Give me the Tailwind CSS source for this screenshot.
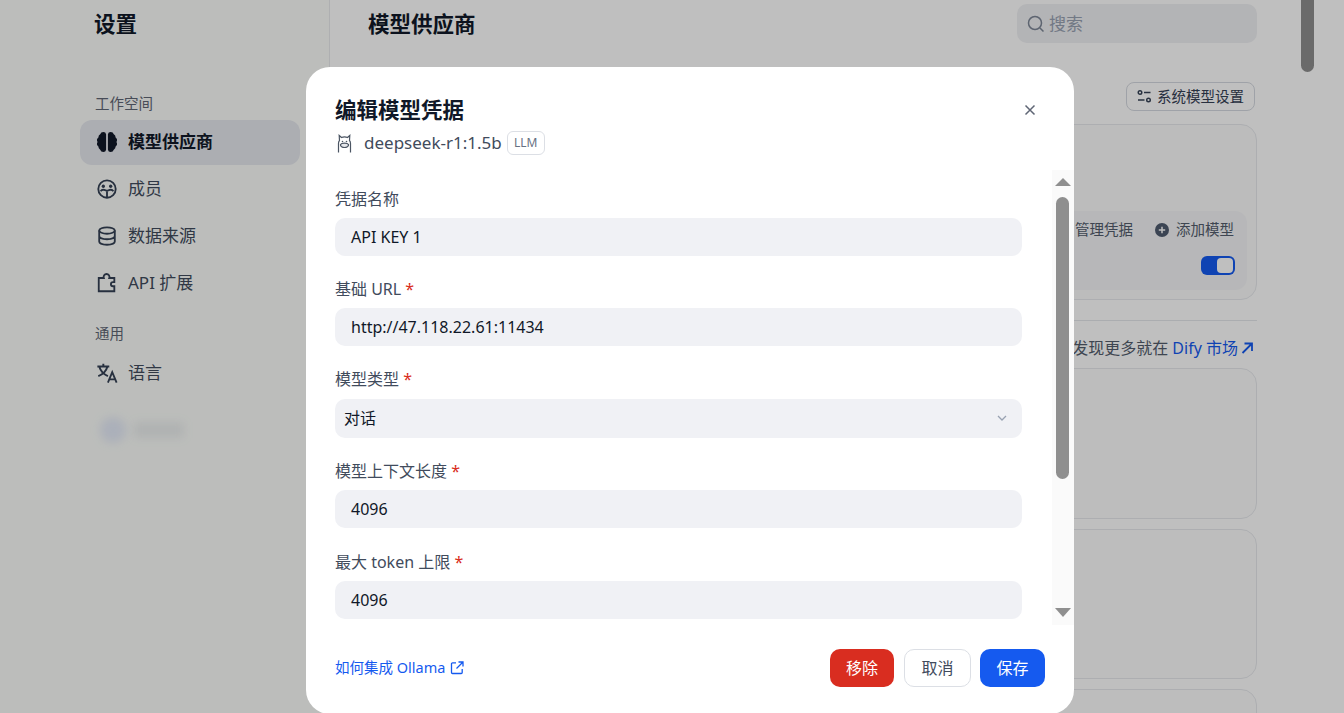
<!DOCTYPE html>
<html lang="zh-CN">
<head>
    <meta charset="UTF-8">
    <meta name="viewport" content="width=device-width, initial-scale=1.0">
    <title>设置</title>
    <script src="https://cdn.jsdelivr.net/npm/@tailwindcss/browser@4"></script>
</head>
<body class="relative h-[713px] overflow-hidden bg-white font-['Noto_Sans','Noto_Sans_CJK_SC',sans-serif] text-[#101828]">

    <!-- page behind the dialog -->
    <div class="flex h-[713px]">
        <aside class="w-[330px] shrink-0 border-r border-[#e9eaed] bg-[#fbfdfa] pl-20 pr-[29px]">
            <h1 class="pl-[14px] pt-[9px] text-[21.5px] leading-[30px] font-bold">设置</h1>
            <p class="mt-[54px] pl-[15px] text-[14.500px] leading-5 text-[#5f6675]">工作空间</p>
            <nav class="mt-[7px] flex flex-col gap-[2px]">
                <a class="flex h-[45px] items-center gap-[10px] rounded-xl bg-[#e6e8ee] pb-[2px] pl-[16px] text-[17px] font-bold">
                    <svg class="h-[22px] w-[22px]" viewBox="0 0 24 24" fill="#101828"><path d="M11 3.5v17a3 3 0 0 1-3 2.5 3.6 3.6 0 0 1-3.4-2.6A3.8 3.8 0 0 1 2.6 17 3.9 3.9 0 0 1 1.7 12a3.9 3.9 0 0 1 .9-5 3.8 3.8 0 0 1 2-3.4A3.6 3.6 0 0 1 8 1a3 3 0 0 1 3 2.5Z"/><path d="M13 3.500v17a3 3 0 0 0 3 2.5 3.600 3.600 0 0 0 3.400-2.600 3.800 3.800 0 0 0 2-3.400 3.900 3.900 0 0 0 .9-5 3.900 3.900 0 0 0-.9-5 3.800 3.800 0 0 0-2-3.400A3.600 3.600 0 0 0 16 1a3 3 0 0 0-3 2.500Z"/></svg>
                    模型供应商
                </a>
                <a class="flex h-[45px] items-center gap-[10px] pb-[2px] pl-[16px] text-[17px] text-[#414b5c]">
                    <svg class="h-[22px] w-[22px]" viewBox="0 0 24 24" fill="none" stroke="#344054" stroke-width="2"><circle cx="12" cy="12" r="9.500"/><circle cx="8" cy="9" r="1.800" fill="#344054" stroke="none"/><circle cx="16" cy="9" r="1.800" fill="#344054" stroke="none"/><path d="M5 14.500c1-1.500 2.500-2 4-1.500l3 1 3-1c1.500-.5 3 0 4 1.500M12 14v7.500"/></svg>
                    成员
                </a>
                <a class="flex h-[45px] items-center gap-[10px] pb-[2px] pl-[16px] text-[17px] text-[#414b5c]">
                    <svg class="h-[22px] w-[22px]" viewBox="0 0 24 24" fill="none" stroke="#344054" stroke-width="2"><ellipse cx="12" cy="6" rx="8.500" ry="3.500"/><path d="M3.500 6v12c0 2 3.800 3.500 8.500 3.500s8.500-1.500 8.500-3.500V6M3.500 12c0 2 3.800 3.500 8.500 3.500s8.500-1.500 8.500-3.500"/></svg>
                    数据来源
                </a>
                <a class="flex h-[45px] items-center gap-[10px] pb-[2px] pl-[16px] text-[17px] text-[#414b5c]">
                    <svg class="h-[22px] w-[22px]" viewBox="0 0 24 24" fill="none" stroke="#344054" stroke-width="2"><path d="M3 6.500h5.500a3.200 3.200 0 1 1 6 0H20v4.500h-1.500a2.200 2.200 0 0 0 0 4.500H20V21H3Z"/></svg>
                    API 扩展
                </a>
            </nav>
            <p class="mt-[17px] pl-[15px] text-[14.500px] leading-5 text-[#5f6675]">通用</p>
            <a class="mt-[8px] flex h-[45px] items-center gap-[10px] pb-[2px] pl-[16px] text-[17px] text-[#414b5c]">
                <svg class="h-[22px] w-[22px]" viewBox="0 0 24 24" fill="none" stroke="#344054" stroke-width="2.100"><path d="M1.500 5h13M8 2v3M3.500 5c1.500 5 5 8.500 9.500 10.500M12.500 5c-1.200 4.500-5 8.500-10 10.500"/><path d="M13 22.500l4.700-11.500 4.800 11.500M14.800 19h5.900" stroke-width="2"/></svg>
                语言
            </a>
            <div class="ml-[20px] mt-[21px] flex items-center gap-[8px]">
                <div class="h-[26px] w-[26px] rounded-full bg-[#93a5ee]/20 blur-[5px]"></div>
                <div class="h-[16px] w-[50px] bg-[#667085]/10 blur-[5px]"></div>
            </div>
        </aside>

        <main class="w-[927px] pl-[38px]">
            <header class="flex items-start justify-between pt-[4px]">
                <h2 class="text-[21.5px] leading-[40px] font-bold">模型供应商</h2>
                <div class="flex h-[39px] w-[240px] items-center gap-[4px] rounded-[10px] bg-[#eff0f3] pl-[10px] text-[17px] text-[#98a2b2]">
                    <svg class="h-[18px] w-[18px]" viewBox="0 0 18 18" fill="none" stroke="#7c8696" stroke-width="1.500"><circle cx="8" cy="8" r="6.500"/><path d="M13 13l3.500 3.500"/></svg>
                    搜索
                </div>
            </header>
            <div class="mt-[38px] flex justify-end pr-[2px]">
                <button class="flex h-[29px] w-[129px] items-center justify-center gap-[5px] rounded-lg border border-[#d5d9e0] bg-white text-[14.500px] text-[#344054]">
                    <svg class="h-[15px] w-[15px]" viewBox="0 0 15 15" fill="none" stroke="#344054" stroke-width="1.400"><circle cx="3" cy="3.500" r="1.800"/><path d="M7 3.500h6.500M1 11h6.500"/><circle cx="11.500" cy="11" r="1.800"/></svg>
                    系统模型设置
                </button>
            </div>
            <section class="mt-[13px] h-[176px] rounded-2xl border border-[#e7e9ed] bg-[#fbfbfb] px-[9px] pt-[86px]">
                <div class="h-[79px] rounded-xl bg-[#f4f5f7] pr-[12px] pt-[8px]">
                    <div class="mr-[1px] flex h-[22px] items-center justify-end text-[14.500px] text-[#535c6c]">
                        <span>管理凭据</span>
                        <svg class="ml-[22px] h-[14px] w-[14px]" viewBox="0 0 14 14"><circle cx="7" cy="7" r="7" fill="#4f5b6f"/><path d="M7 3.800v6.400M3.800 7h6.400" stroke="#fff" stroke-width="1.500"/></svg>
                        <span class="ml-[7px]">添加模型</span>
                    </div>
                    <div class="mt-[15px] flex justify-end">
                        <div class="flex h-[19px] w-[34px] items-center justify-end rounded-[6px] bg-[#155aef] pr-[2px]">
                            <div class="h-[15px] w-[16px] rounded-[4px] bg-white"></div>
                        </div>
                    </div>
                </div>
            </section>
            <div class="mt-[20px] border-t border-[#e5e7eb]"></div>
            <p class="mt-[17px] pr-[3px] text-right text-[16px] leading-[20px] text-[#535c6c]">发现更多就在 <span class="text-[#155aef]">Dify 市场</span><svg class="ml-[2px] inline h-[14px] w-[14px] align-[-1px]" viewBox="0 0 14 14" fill="none" stroke="#155aef" stroke-width="1.800"><path d="M2.500 12L12 2.500M4.500 2.500H12V10"/></svg></p>
            <div class="mt-[10px] flex flex-col gap-[10px]">
                <div class="h-[151px] rounded-2xl border border-[#e7e9ed] bg-[#fdfdfd]"></div>
                <div class="h-[150px] rounded-2xl border border-[#e7e9ed] bg-[#fdfdfd]"></div>
                <div class="h-[150px] rounded-2xl border border-[#e7e9ed] bg-[#fdfdfd]"></div>
            </div>
        </main>
    </div>

    <!-- page scrollbar -->
    <div class="absolute left-[1301px] top-[-10px] h-[82px] w-[13px] rounded-full bg-[#8e8e8e]"></div>

    <div class="absolute inset-0 bg-black/25"></div>

    <!-- dialog -->
    <div class="absolute left-[306px] top-[67px] flex h-[647px] w-[768px] flex-col rounded-3xl bg-white">
        <div class="relative px-[29px] pt-[28px]">
            <h3 class="text-[21.5px] leading-[30px] font-bold">编辑模型凭据</h3>
            <div class="mt-[5px] flex h-[26px] items-center">
                <svg class="ml-[1px] h-[19px] w-[17px]" viewBox="0 0 17 19" fill="none" stroke="#4b5563" stroke-width="1.200"><path d="M2.500 18.500V9.500C2.500 8 3 7 3.500 6.500L3.200 1.500l2.300 2c1.500-.6 4.500-.6 6 0l2.300-2L13.500 6.500c.5.500 1 1.500 1 3v9"/><path d="M4.500 10.500c1-1.800 7-1.800 8 0 .4 2-2 3-4 3s-4.400-1-4-3Z" fill="#e5e7eb"/><path d="M6.500 7.500h.01M10.500 7.500h.01" stroke-width="1.600" stroke-linecap="round"/></svg>
                <span class="ml-[11px] text-[17px] text-[#414b5c]">deepseek-r1:1.5b</span>
                <span class="ml-[5px] flex h-[24px] w-[38px] items-center justify-center rounded-md border border-[#dcdfe5] text-[12px] text-[#677183]">LLM</span>
            </div>
            <svg class="absolute right-[38px] top-[37px] h-[12px] w-[12px]" viewBox="0 0 12 12" fill="none" stroke="#5f6675" stroke-width="1.500"><path d="M1.500 1.500l9 9M10.500 1.500l-9 9"/></svg>
        </div>

        <div class="relative mt-[14px] h-[455px] overflow-hidden">
            <form class="flex w-[716px] flex-col gap-[21px] pl-[29px] pt-[17px]">
                <div>
                    <label class="block h-[22px] text-[16px] leading-[24px] text-[#414b5c]">凭据名称</label>
                    <div class="mt-[9px] flex h-[38px] w-[687px] items-center rounded-[10px] bg-[#f0f1f5] pl-[16px] text-[16px]">API KEY 1</div>
                </div>
                <div>
                    <label class="block h-[22px] text-[16px] leading-[24px] text-[#414b5c]">基础 URL <span class="text-[#d92d20]">*</span></label>
                    <div class="mt-[9px] flex h-[38px] w-[687px] items-center rounded-[10px] bg-[#f0f1f5] pl-[16px] text-[16px]">http://47.118.22.61:11434</div>
                </div>
                <div>
                    <label class="block h-[22px] text-[16px] leading-[24px] text-[#414b5c]">模型类型 <span class="text-[#d92d20]">*</span></label>
                    <div class="mt-[10px] flex h-[39px] w-[687px] items-center justify-between rounded-[10px] bg-[#f0f1f5] pb-[1px] pl-[9px] pr-[13px] text-[16px]">
                        对话
                        <svg class="h-[14px] w-[14px]" viewBox="0 0 14 14" fill="none" stroke="#98a2b2" stroke-width="1.300"><path d="M3 5l4 4 4-4"/></svg>
                    </div>
                </div>
                <div>
                    <label class="block h-[22px] text-[16px] leading-[24px] text-[#414b5c]">模型上下文长度 <span class="text-[#d92d20]">*</span></label>
                    <div class="mt-[9px] flex h-[38px] w-[687px] items-center rounded-[10px] bg-[#f0f1f5] pl-[16px] text-[16px]">4096</div>
                </div>
                <div class="pt-[1px]">
                    <label class="block h-[22px] text-[16px] leading-[24px] text-[#414b5c]">最大 token 上限 <span class="text-[#d92d20]">*</span></label>
                    <div class="mt-[9px] flex h-[38px] w-[687px] items-center rounded-[10px] bg-[#f0f1f5] pl-[16px] text-[16px]">4096</div>
                </div>
            </form>
            <!-- scrollbar of the form -->
            <div class="absolute right-0 top-0 h-full w-[22px] bg-[#fafafa]">
                <div class="absolute left-[3px] top-[8px] h-0 w-0 border-x-[8px] border-b-[8px] border-x-transparent border-b-[#8f8f8f]"></div>
                <div class="absolute left-[4px] top-[27px] h-[282px] w-[13px] rounded-full bg-[#8f8f8f]"></div>
                <div class="absolute left-[3px] bottom-[8px] h-0 w-0 border-x-[8px] border-t-[9px] border-x-transparent border-t-[#8f8f8f]"></div>
            </div>
        </div>

        <div class="flex items-center justify-between pl-[29px] pr-[29px] pt-[24px]">
            <a class="flex items-center gap-[5px] text-[14.500px] text-[#155aef]">如何集成 Ollama
                <svg class="h-[14px] w-[14px]" viewBox="0 0 14 14" fill="none" stroke="#155aef" stroke-width="1.300"><path d="M6 1.800H2.500a1 1 0 0 0-1 1v8.700a1 1 0 0 0 1 1h8.700a1 1 0 0 0 1-1V8M8.500 1h4.500v4.500M13 1L6.500 7.500"/></svg>
            </a>
            <div class="flex items-center">
                <button class="h-[38px] w-[64px] rounded-[10px] bg-[#d92d20] text-[16px] text-white">移除</button>
                <button class="ml-[10px] h-[38px] w-[67px] rounded-[10px] border border-[#dcdfe5] bg-white text-[16px] text-[#414b5c]">取消</button>
                <button class="ml-[9px] h-[38px] w-[65px] rounded-[10px] bg-[#155aef] text-[16px] text-white">保存</button>
            </div>
        </div>
    </div>
</body>
</html>
